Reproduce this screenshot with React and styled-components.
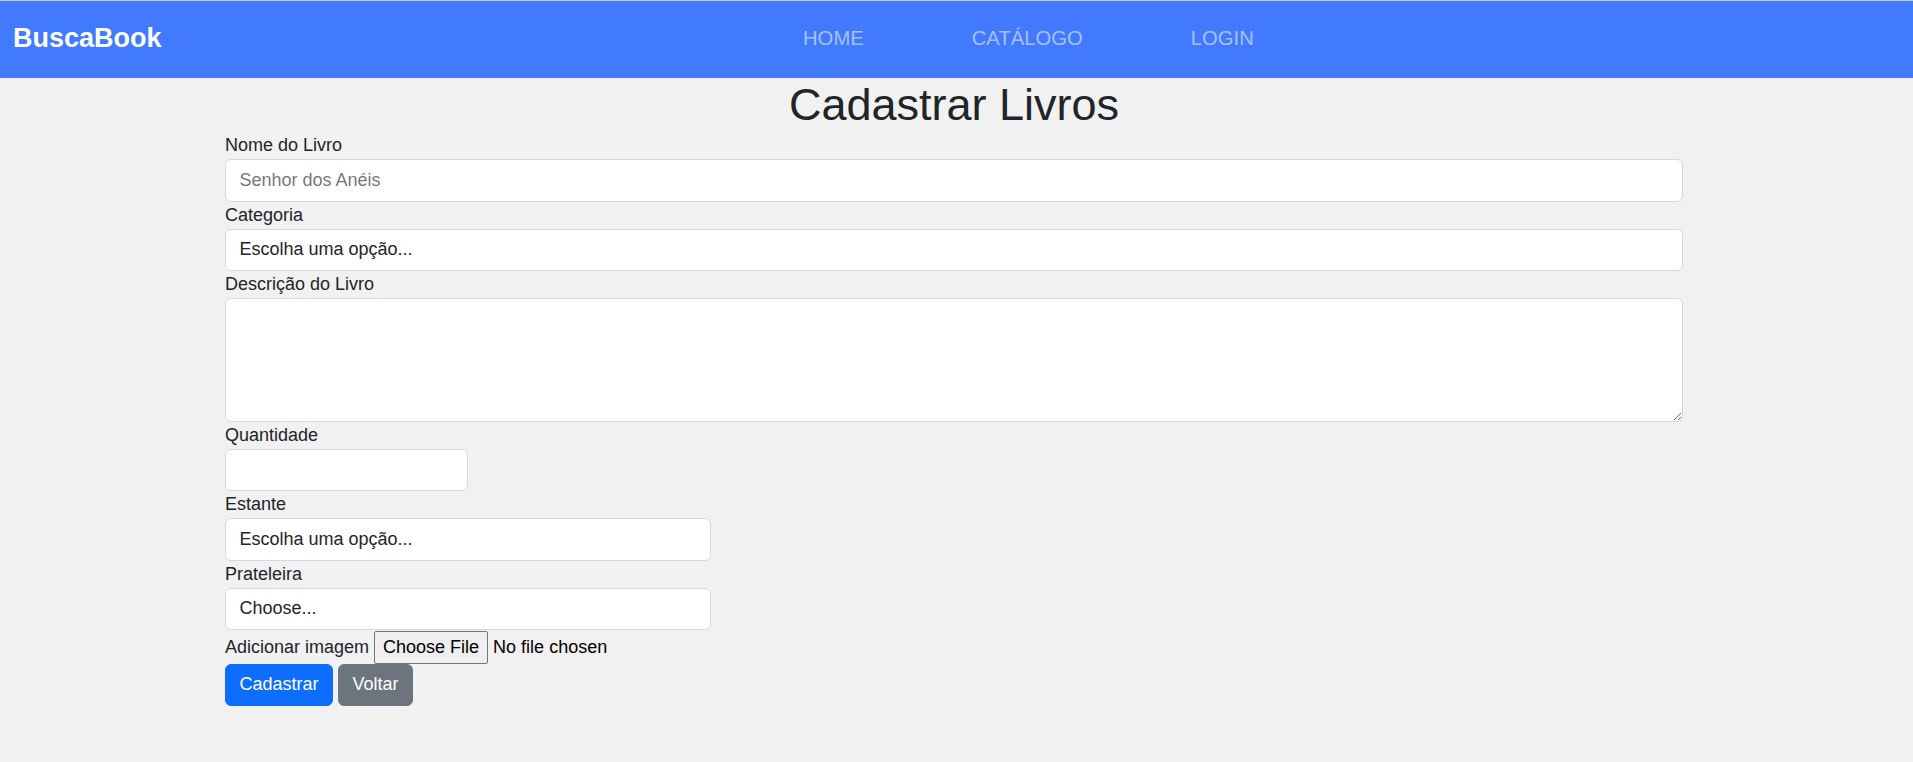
import React from "react";
import styled, { createGlobalStyle, css } from "styled-components";

const Global = createGlobalStyle`
  *, *::before, *::after { box-sizing: border-box; }
  html, body { margin: 0; background: #f1f1f1; min-height: 100%; }
  body {
    font-family: "Liberation Sans", Arial, sans-serif;
    color: #212529;
  }
`;

const Navbar = styled.header`
  display: flex;
  align-items: center;
  height: 78px;
  border-top: 1px solid #c4c4c4;
  background: #4179ff;
  padding: 0 0 3px 13px;
`;

const Brand = styled.a`
  flex: 0 0 790px;
  font-size: 27px;
  font-weight: 700;
  color: #fff;
  text-decoration: none;
  line-height: 1.2;
`;

const NavList = styled.nav`
  display: flex;
  gap: 108px;
`;

const NavLink = styled.a`
  font-size: 20.25px;
  line-height: 1.2;
  color: rgba(255, 255, 255, 0.55);
  text-decoration: none;
  text-transform: uppercase;
`;

const Main = styled.main`
  padding: 0 230px 40px 225px;
`;

const Title = styled.h1`
  margin: 0;
  text-align: center;
  font-size: 45px;
  font-weight: 400;
  line-height: 54px;
  color: #212529;
`;

const Form = styled.form`
  display: flex;
  flex-direction: column;
`;

const Field = styled.div`
  display: flex;
  flex-direction: column;
  width: ${(p) => (p.$cols ? `calc(100% * ${p.$cols} / 12)` : "100%")};
`;

const Label = styled.label`
  font-size: 18px;
  line-height: 27px;
  color: #212529;
`;

const control = css`
  display: block;
  width: 100%;
  padding: 6.75px 13.5px;
  font-family: inherit;
  font-size: 18px;
  line-height: 27px;
  color: #212529;
  background: #fff;
  border: 1px solid #d5d8dc;
  border-radius: 6px;
  outline: none;
`;

const Input = styled.input`
  ${control}
  height: 42.5px;
  &::placeholder { color: rgba(33, 37, 41, 0.65); }
`;

const Select = styled.select`
  ${control}
  height: 42.5px;
  appearance: none;
  -webkit-appearance: none;
`;

const TextArea = styled.textarea`
  ${control}
  height: 123.5px;
  resize: both;
`;

const FileRow = styled.div`
  display: flex;
  align-items: center;
  gap: 5px;
  padding-top: 1px;
  height: 33.7px;
  font-size: 18px;
`;

const FileButton = styled.button`
  height: 32.7px;
  padding: 0 8px;
  font-family: inherit;
  font-size: 18px;
  color: #000;
  background: #efefef;
  border: 1px solid #767676;
  border-radius: 2px;
`;

const FileStatus = styled.span`
  font-size: 18px;
  color: #000;
`;

const Actions = styled.div`
  display: flex;
  gap: 5px;
`;

const Button = styled.button`
  padding: 6.75px 13.5px;
  font-family: inherit;
  font-size: 18px;
  line-height: 27px;
  color: #fff;
  border: 1px solid ${(p) => (p.$variant === "secondary" ? "#6c757d" : "#0d6efd")};
  background: ${(p) => (p.$variant === "secondary" ? "#6c757d" : "#0d6efd")};
  border-radius: 6px;
  cursor: pointer;
`;

export default function App() {
  return (
    <>
      <Global />
      <Navbar>
        <Brand href="#">BuscaBook</Brand>
        <NavList>
          <NavLink href="#">Home</NavLink>
          <NavLink href="#">Catálogo</NavLink>
          <NavLink href="#">Login</NavLink>
        </NavList>
      </Navbar>
      <Main>
        <Title>Cadastrar Livros</Title>
        <Form onSubmit={(e) => e.preventDefault()}>
          <Field>
            <Label htmlFor="nome">Nome do Livro</Label>
            <Input id="nome" placeholder="Senhor dos Anéis" />
          </Field>
          <Field>
            <Label htmlFor="categoria">Categoria</Label>
            <Select id="categoria" defaultValue="">
              <option value="">Escolha uma opção...</option>
            </Select>
          </Field>
          <Field>
            <Label htmlFor="descricao">Descrição do Livro</Label>
            <TextArea id="descricao" rows={4} />
          </Field>
          <Field $cols={2}>
            <Label htmlFor="quantidade">Quantidade</Label>
            <Input id="quantidade" type="number" />
          </Field>
          <Field $cols={4}>
            <Label htmlFor="estante">Estante</Label>
            <Select id="estante" defaultValue="">
              <option value="">Escolha uma opção...</option>
            </Select>
          </Field>
          <Field $cols={4}>
            <Label htmlFor="prateleira">Prateleira</Label>
            <Select id="prateleira" defaultValue="">
              <option value="">Choose...</option>
            </Select>
          </Field>
          <FileRow>
            <Label as="span">Adicionar imagem</Label>
            <FileButton type="button">Choose File</FileButton>
            <FileStatus>No file chosen</FileStatus>
          </FileRow>
          <Actions>
            <Button type="submit">Cadastrar</Button>
            <Button type="button" $variant="secondary">Voltar</Button>
          </Actions>
        </Form>
      </Main>
    </>
  );
}
